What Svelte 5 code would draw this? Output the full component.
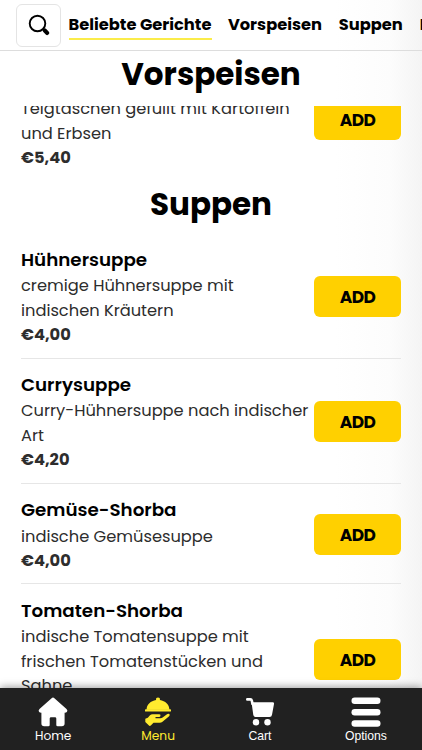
<script lang="ts">
  let selected = $state('Beliebte Gerichte');

  const categories = [
    { name: 'Beliebte Gerichte', width: 143 },
    { name: 'Vorspeisen', width: 94.5 },
    { name: 'Suppen', width: 64.5 },
    { name: 'Hauptgerichte', width: 120 }
  ];

  const soups = [
    { name: 'Hühnersuppe', lines: ['cremige Hühnersuppe mit', 'indischen Kräutern'], price: '€4,00' },
    { name: 'Currysuppe', lines: ['Curry-Hühnersuppe nach indischer', 'Art'], price: '€4,20' },
    { name: 'Gemüse-Shorba', lines: ['indische Gemüsesuppe'], price: '€4,00' },
    { name: 'Tomaten-Shorba', lines: ['indische Tomatensuppe mit', 'frischen Tomatenstücken und', 'Sahne'], price: '€4,50' }
  ];
</script>

<div class="app">
  <header>
    <button class="search" aria-label="Suche">
      <svg viewBox="0 0 24 24" width="24" height="24">
        <circle cx="10.5" cy="10.5" r="7.8" fill="none" stroke="#000" stroke-width="1.9" />
        <path d="M16 16l2 2" stroke="#000" stroke-width="2" />
        <path d="M17.8 17.6l2.4 2.3" stroke="#000" stroke-width="4.2" stroke-linecap="round" />
      </svg>
    </button>
    <nav class="categories">
      {#each categories as category (category.name)}
        <button
          class:active={selected === category.name}
          style:width="{category.width}px"
          onclick={() => (selected = category.name)}
        >{category.name}</button>
      {/each}
    </nav>
  </header>

  <h2 class="current">Vorspeisen</h2>

  <main>
    <div class="scrolled">
      <article class="item first">
        <div class="info">
          <p>Teigtaschen gefüllt mit Kartoffeln</p>
          <p>und Erbsen</p>
          <strong>€5,40</strong>
        </div>
        <button class="add">ADD</button>
      </article>

      <h2>Suppen</h2>

      {#each soups as item (item.name)}
        <article class="item">
          <div class="info">
            <h3>{item.name}</h3>
            {#each item.lines as line}
              <p>{line}</p>
            {/each}
            <strong>{item.price}</strong>
          </div>
          <button class="add">ADD</button>
        </article>
      {/each}
    </div>
  </main>

  <footer>
    <a href="#home">
      <svg viewBox="0 0 30 30" width="30" height="30">
        <path fill="currentColor" d="M13.6 1.2Q15 0 16.4 1.2L28.5 12Q30 13.4 29 14.8Q28.4 15.7 26.6 15.7V26.5Q26.6 29.3 23.8 29.3H19.7Q18.3 29.3 18.3 27.9V21.6Q18.3 20.3 17 20.3H13Q11.7 20.3 11.7 21.6V27.9Q11.7 29.3 10.3 29.3H6.2Q3.4 29.3 3.4 26.5V15.7Q1.6 15.7 1 14.8Q0 13.4 1.5 12Z" />
      </svg>
      <span>Home</span>
    </a>
    <a href="#menu" class="selected">
      <svg viewBox="0 0 30 30" width="30" height="30">
        <g fill="currentColor">
          <path d="M3.6 12.8C3.6 7.4 7.8 3.9 13.1 3C12.7 1.3 13.6.5 15 .5S17.3 1.3 16.9 3C22.2 3.9 26.4 7.4 26.4 12.8Z" />
          <rect x="2" y="12.3" width="26" height="2.3" rx=".7" />
          <path d="M2.3 21.8L4.8 20.8L7 18.3Q8 17.3 9.5 17.3H16Q17.7 17.3 17.5 18.7T15.8 20H12.5V21.3H17.5Q18.6 21.3 19.6 20.5L24 17.2Q25.3 16.4 26.3 17.1Q27.3 18 26.1 19.2L19.5 24.8Q18.3 25.7 16.7 25.7H10.5L7.8 28.5Q6.7 29.5 5.7 28.3L2.3 25Z" />
        </g>
      </svg>
      <span>Menu</span>
    </a>
    <a href="#cart" class="plain">
      <svg viewBox="0 0 30 30" width="30" height="30">
        <path d="M2.3 2.4H5.4Q6.5 2.4 6.8 3.6L7.5 7" fill="none" stroke="currentColor" stroke-width="2.6" stroke-linecap="round" />
        <path fill="currentColor" d="M6.5 5.3H27.7Q29.3 5.3 29 6.9L27 17.8Q26.7 20 24.5 20H10.5Q8.7 20 8.3 18Z" />
        <circle cx="11" cy="25.3" r="3.2" fill="currentColor" />
        <circle cx="22.5" cy="25.3" r="3.2" fill="currentColor" />
      </svg>
      <span>Cart</span>
    </a>
    <a href="#options" class="plain">
      <svg viewBox="0 0 30 30" width="30" height="30">
        <g fill="currentColor">
          <rect x="0.5" y="0.5" width="29" height="6.5" rx="3.2" />
          <rect x="0.5" y="12" width="29" height="6.5" rx="3.2" />
          <rect x="0.5" y="23.3" width="29" height="6.5" rx="3.2" />
        </g>
      </svg>
      <span>Options</span>
    </a>
  </footer>
</div>

<style>
  :global(body) {
    margin: 0;
    overflow: hidden;
  }

  .app {
    display: flex;
    flex-direction: column;
    width: 422px;
    height: 750px;
    overflow: hidden;
    background: linear-gradient(90deg, #fff 335px, #fcfcfc 390px, #f4f4f4 422px);
    font-family: Poppins, Inter, sans-serif;
    color: #000;
  }

  button {
    padding: 0;
    border: 0;
    background: none;
    font-family: inherit;
    color: inherit;
    cursor: pointer;
  }

  header {
    display: flex;
    flex: none;
    align-items: center;
    box-sizing: border-box;
    height: 51px;
    padding-left: 15.5px;
    gap: 8px;
    border-bottom: 1px solid #ddd;
  }

  .search {
    display: grid;
    place-items: center;
    flex: none;
    box-sizing: border-box;
    width: 45px;
    height: 43px;
    border: 1px solid #e4e4e4;
    border-radius: 6px;
    background: #fff;
  }

  .search svg {
    margin-left: 1px;
  }

  .categories {
    display: flex;
    gap: 16.4px;
  }

  .categories button {
    flex: none;
    height: 29px;
    border-bottom: 2px solid transparent;
    font-size: 16.25px;
    font-weight: 700;
    line-height: 27px;
    text-align: left;
    white-space: nowrap;
  }

  .categories .active {
    border-color: #fbec4a;
  }

  h2 {
    margin: 0;
    font-size: 31px;
    font-weight: 700;
    line-height: 50px;
    text-align: center;
  }

  .current {
    flex: none;
    height: 55px;
    line-height: 47px;
  }

  main {
    flex: 1;
    min-height: 0;
    overflow: hidden;
  }

  .scrolled {
    margin-top: -9px;
    padding: 0 21px;
  }

  .scrolled h2 {
    padding: 2px 0 5px;
  }

  .item {
    display: flex;
    align-items: center;
    justify-content: space-between;
    border-bottom: 1px solid #e6e6e6;
    padding: 12.4px 0 9.7px;
  }

  .item.first {
    align-items: flex-start;
    border: 0;
    padding: 0 0 6px;
  }

  .info {
    color: #2d2d2d;
    font-size: 16.25px;
    line-height: 24.5px;
    white-space: nowrap;
  }

  h3 {
    margin: 0 0 1.2px;
    color: #000;
    font-size: 18.3px;
    font-weight: 600;
    line-height: 27.3px;
  }

  p {
    margin: 0;
  }

  strong {
    display: block;
    font-weight: 700;
  }

  .add {
    flex: none;
    width: 87px;
    height: 41px;
    margin-left: -20px;
    border-radius: 6px;
    background: #ffd000;
    font-size: 17px;
    font-weight: 700;
    letter-spacing: -0.5px;
  }

  .first .add {
    margin-top: 2px;
  }

  footer {
    display: flex;
    justify-content: space-around;
    flex: none;
    height: 62px;
    background: #212121;
    box-shadow: 0 -1px 8px rgba(0, 0, 0, 0.4);
    z-index: 1;
  }

  footer a {
    display: flex;
    flex-direction: column;
    align-items: center;
    padding-top: 9px;
    color: #fff;
    font-size: 12.2px;
    line-height: 18px;
    text-decoration: none;
  }

  .selected {
    color: #ffeb2f;
  }

  .plain {
    font-family: 'Liberation Sans', Arial, sans-serif;
  }
</style>
